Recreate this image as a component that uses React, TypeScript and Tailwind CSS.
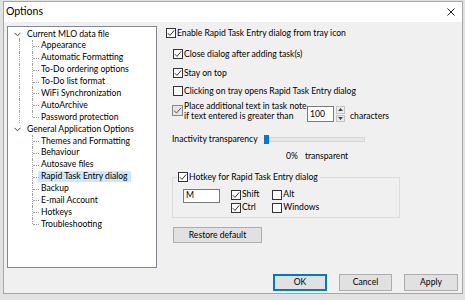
import React from "react";

type TreeChild = { label: string; selected?: boolean };
type TreeGroup = { label: string; items: TreeChild[] };

const groups: TreeGroup[] = [
  {
    label: "Current MLO data file",
    items: [
      { label: "Appearance" },
      { label: "Automatic Formatting" },
      { label: "To-Do ordering options" },
      { label: "To-Do list format" },
      { label: "WiFi Synchronization" },
      { label: "AutoArchive" },
      { label: "Password protection" },
    ],
  },
  {
    label: "General Application Options",
    items: [
      { label: "Themes and Formatting" },
      { label: "Behaviour" },
      { label: "Autosave files" },
      { label: "Rapid Task Entry dialog", selected: true },
      { label: "Backup" },
      { label: "E-mail Account" },
      { label: "Hotkeys" },
      { label: "Troubleshooting" },
    ],
  },
];

function Check({ checked }: { checked?: boolean }) {
  return (
    <span className="inline-flex w-[10px] h-[10px] shrink-0 border border-[#333333] bg-white items-center justify-center">
      {checked && (
        <svg width="8" height="8" viewBox="0 0 8 8">
          <path d="M0.8 4.2 L3 6.4 L7.2 1.4" fill="none" stroke="#333333" strokeWidth="1" />
        </svg>
      )}
    </span>
  );
}

function Chevron() {
  return (
    <svg width="7" height="5" viewBox="0 0 7 5" className="absolute left-[6px] top-[4px]">
      <path d="M0.5 0.8 L3.5 3.8 L6.5 0.8" fill="none" stroke="#404040" strokeWidth="1" />
    </svg>
  );
}

function Tree() {
  return (
    <div className="w-[150px] h-[242px] border border-[#828790] bg-white pt-[1px]">
      {groups.map((g, gi) => {
        const lastGroup = gi === groups.length - 1;
        return (
          <div key={g.label}>
            <div className="relative h-[11.9px] flex items-center pl-[19px] whitespace-nowrap">
              <Chevron />
              {!lastGroup && (
                <span className="absolute left-[11px] top-[10px] bottom-0 border-l border-dotted border-[#a0a0a0]" />
              )}
              {g.label}
            </div>
            {g.items.map((it, i) => {
              const last = i === g.items.length - 1;
              return (
                <div key={it.label} className="relative h-[11.9px] flex items-center">
                  {!lastGroup && (
                    <span className="absolute left-[11px] top-0 bottom-0 border-l border-dotted border-[#a0a0a0]" />
                  )}
                  <span
                    className={
                      last
                        ? "absolute left-[24px] top-0 h-[6px] border-l border-dotted border-[#a0a0a0]"
                        : "absolute left-[24px] top-0 bottom-0 border-l border-dotted border-[#a0a0a0]"
                    }
                  />
                  <span className="absolute left-[25px] top-[6px] w-[6px] border-t border-dotted border-[#a0a0a0]" />
                  <span
                    className={
                      it.selected
                        ? "ml-[30px] px-[3px] h-[11.5px] flex items-center bg-[#cce8ff] whitespace-nowrap"
                        : "ml-[30px] px-[3px] whitespace-nowrap"
                    }
                  >
                    {it.label}
                  </span>
                </div>
              );
            })}
          </div>
        );
      })}
    </div>
  );
}

function Btn({ label, primary, w }: { label: string; primary?: boolean; w: string }) {
  return (
    <div
      className={
        primary
          ? `${w} h-[17px] border-2 border-[#0078d7] bg-[#e1e1e1] flex items-center justify-center`
          : `${w} h-[17px] border border-[#adadad] bg-[#e1e1e1] flex items-center justify-center`
      }
    >
      {label}
    </div>
  );
}

function RightPanel() {
  return (
    <div className="ml-[9px] flex flex-col">
      <div className="h-[14px] flex items-center gap-[1px]">
        <Check checked />
        <span>Enable Rapid Task Entry dialog from tray icon</span>
      </div>
      <div className="ml-[7px] mt-[7px] h-[14px] flex items-center gap-[1px]">
        <Check checked />
        <span>Close dialog after adding task(s)</span>
      </div>
      <div className="ml-[7px] mt-[5px] h-[14px] flex items-center gap-[1px]">
        <Check checked />
        <span>Stay on top</span>
      </div>
      <div className="ml-[7px] mt-[4px] h-[14px] flex items-center gap-[1px]">
        <Check />
        <span>Clicking on tray opens Rapid Task Entry dialog</span>
      </div>
      <div className="ml-[6px] mt-[3px] h-[22px] flex items-start">
        <span className="mt-[4px] w-[11px] h-[11px] shrink-0 border border-[#888] bg-[#e6e6e6] flex items-center justify-center">
          <svg width="9" height="9" viewBox="0 0 9 9">
            <path d="M1 4.6 L3.5 7 L8 1.8" fill="none" stroke="#555" strokeWidth="1" />
          </svg>
        </span>
        <div className="ml-[1px] w-[123px] leading-[9.5px] mt-[1px] whitespace-nowrap">
          <div>Place additional text in task note</div>
          <div>if text entered is greater than</div>
        </div>
        <div className="mt-[5px] w-[27px] h-[16px] border border-[#7a7a7a] bg-white pl-[2px] flex items-center">
          100
        </div>
        <div className="ml-[2px] mt-[5px] w-[9px] h-[16px] flex flex-col gap-[1px]">
          <div className="flex-1 bg-[#ececec] border border-[#c4c4c4] flex items-center justify-center">
            <svg width="5" height="3" viewBox="0 0 5 3"><path d="M0 3 L2.5 0 L5 3 Z" fill="#444" /></svg>
          </div>
          <div className="flex-1 bg-[#ececec] border border-[#c4c4c4] flex items-center justify-center">
            <svg width="5" height="3" viewBox="0 0 5 3"><path d="M0 0 L2.5 3 L5 0 Z" fill="#444" /></svg>
          </div>
        </div>
        <span className="ml-[5px] mt-[9px]">characters</span>
      </div>
      <div className="ml-[6px] mt-[10px] h-[12px] flex items-center">
        <span className="w-[92px] whitespace-nowrap">Inactivity transparency</span>
        <div className="w-[101px] h-[10px] flex items-center">
          <div className="w-[5px] h-[9px] bg-[#0078d7]" />
          <div className="flex-1 h-[5px] bg-[#e7e7e7] border border-[#d6d6d6]" />
        </div>
      </div>
      <div className="mt-[5px] h-[12px] flex items-center">
        <span className="ml-[120px]">0%</span>
        <span className="ml-[7px]">transparent</span>
      </div>
      <fieldset className="ml-[6px] mt-[9px] w-[228px] h-[47px] border border-[#dcdcdc] px-[10px]">
        <legend className="ml-[-6px] pl-[1px] pr-[2px] flex items-center gap-[1px]">
          <Check checked />
          <span>Hotkey for Rapid Task Entry dialog</span>
        </legend>
        <div className="flex mt-[5px]">
          <div className="w-[37px] h-[14px] border border-[#7a7a7a] bg-white pl-[2px] flex items-center">M</div>
          <div className="ml-[11px] mt-[1px] flex flex-col gap-[3px]">
            <div className="h-[10px] flex items-center gap-[1px]">
              <Check checked />
              <span>Shift</span>
            </div>
            <div className="h-[10px] flex items-center gap-[1px]">
              <Check checked />
              <span>Ctrl</span>
            </div>
          </div>
          <div className="ml-[13px] mt-[1px] flex flex-col gap-[3px]">
            <div className="h-[10px] flex items-center gap-[1px]">
              <Check />
              <span>Alt</span>
            </div>
            <div className="h-[10px] flex items-center gap-[1px]">
              <Check />
              <span>Windows</span>
            </div>
          </div>
        </div>
      </fieldset>
      <div className="ml-[7px] mt-[9px] w-[89px] h-[16px] border border-[#adadad] bg-[#e1e1e1] flex items-center justify-center">
        Restore default
      </div>
    </div>
  );
}

export default function App() {
  return (
    <div
      className="w-[465px] h-[300px] bg-[#e2e2e2] pl-[3px] pt-[1px] overflow-hidden text-[8.6px] text-black"
      style={{ fontFamily: 'Lato, "Segoe UI", sans-serif' }}
    >
      <div className="w-[460px] h-[293px] border border-[#a7a7a7] bg-[#f0f0f0] flex flex-col">
        <div className="h-[20px] bg-white flex items-center justify-between pl-[2px] pr-[7px] shrink-0">
          <span className="text-[10.5px]">Options</span>
          <svg width="8" height="8" viewBox="0 0 8 8">
            <path d="M0.5 0.5 L7.5 7.5 M7.5 0.5 L0.5 7.5" stroke="#222" strokeWidth="1" />
          </svg>
        </div>
        <div className="flex-1 flex flex-col pt-[4px] pl-[3px] pr-[4px] pb-[2px]">
          <div className="flex">
            <Tree />
            <RightPanel />
          </div>
          <div className="mt-auto flex justify-end gap-[12px]">
            <Btn label="OK" primary w="w-[54px]" />
            <Btn label="Cancel" w="w-[53px]" />
            <Btn label="Apply" w="w-[54px]" />
          </div>
        </div>
      </div>
    </div>
  );
}
